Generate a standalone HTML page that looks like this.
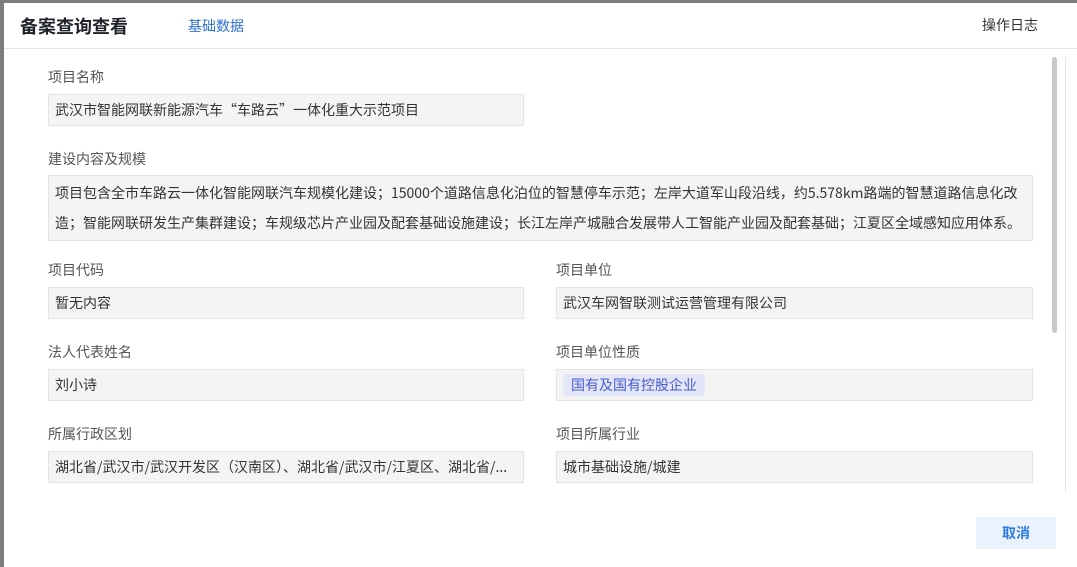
<!DOCTYPE html>
<html><head><meta charset="utf-8"><style>
*{box-sizing:border-box;margin:0;padding:0}
body{width:1077px;height:567px;overflow:hidden;background:#7d7d7d;font-family:"Noto Sans CJK SC","Liberation Sans",sans-serif;position:relative}
.modal{position:absolute;left:4px;top:3px;width:1073px;height:564px;background:#fff}
.hdr{position:absolute;left:0;top:0;width:100%;height:46px;border-bottom:1px solid #e6e6e6}
.title{position:absolute;left:16px;top:10px;font-size:18px;line-height:26px;font-weight:bold;color:#1f2329}
.tab{position:absolute;left:184px;top:13px;font-size:14px;line-height:20px;color:#2b6fd6}
.log{position:absolute;left:978px;top:12px;font-size:14px;line-height:20px;color:#333}
.lbl{position:absolute;font-size:14px;line-height:20px;color:#555}
.inp{position:absolute;height:32px;background:#f4f4f4;border:1px solid #e4e4e4;font-size:14px;color:#333;padding:0 6px;line-height:30px;white-space:nowrap;overflow:hidden}
.tag{display:inline-block;background:#e3e6f6;color:#4a5ccf;border-radius:3px;padding:0 8px;line-height:22px;margin-top:4px;font-size:14px}
.sb{position:absolute;left:1048px;top:54px;width:5px;height:276px;background:#c8c8c8;border-radius:3px}
.vl{position:absolute;left:1061px;top:54px;width:1px;height:436px;background:#e6e6e6}
.btn{position:absolute;left:972px;top:514px;width:80px;height:32px;background:#eaf2fd;color:#2b7be6;font-weight:bold;font-size:14px;text-align:center;line-height:32px;border-radius:2px}
</style></head><body>
<div class="modal">
<div class="hdr"><div class="title">备案查询查看</div><div class="tab">基础数据</div><div class="log">操作日志</div></div>
<div class="lbl" style="left:44px;top:64px">项目名称</div>
<div class="inp" style="left:44px;top:91px;width:476px">武汉市智能网联新能源汽车“车路云”一体化重大示范项目</div>
<div class="lbl" style="left:44px;top:146px">建设内容及规模</div>
<div class="inp" style="left:44px;top:172px;width:985px;height:66px;line-height:30px;padding-top:2px;white-space:normal">项目包含全市车路云一体化智能网联汽车规模化建设；15000个道路信息化泊位的智慧停车示范；左岸大道军山段沿线，约5.578km路端的智慧道路信息化改造；智能网联研发生产集群建设；车规级芯片产业园及配套基础设施建设；长江左岸产城融合发展带人工智能产业园及配套基础；江夏区全域感知应用体系。</div>
<div class="lbl" style="left:44px;top:257px">项目代码</div>
<div class="inp" style="left:44px;top:284px;width:476px">暂无内容</div>
<div class="lbl" style="left:552px;top:257px">项目单位</div>
<div class="inp" style="left:552px;top:284px;width:477px">武汉车网智联测试运营管理有限公司</div>
<div class="lbl" style="left:44px;top:339px">法人代表姓名</div>
<div class="inp" style="left:44px;top:366px;width:476px">刘小诗</div>
<div class="lbl" style="left:552px;top:339px">项目单位性质</div>
<div class="inp" style="left:552px;top:366px;width:477px;line-height:normal"><span class="tag">国有及国有控股企业</span></div>
<div class="lbl" style="left:44px;top:421px">所属行政区划</div>
<div class="inp" style="left:44px;top:448px;width:476px">湖北省/武汉市/武汉开发区（汉南区）、湖北省/武汉市/江夏区、湖北省/...</div>
<div class="lbl" style="left:552px;top:421px">项目所属行业</div>
<div class="inp" style="left:552px;top:448px;width:477px">城市基础设施/城建</div>
<div class="sb"></div><div class="vl"></div>
<div class="btn">取消</div>
</div>
</body></html>
